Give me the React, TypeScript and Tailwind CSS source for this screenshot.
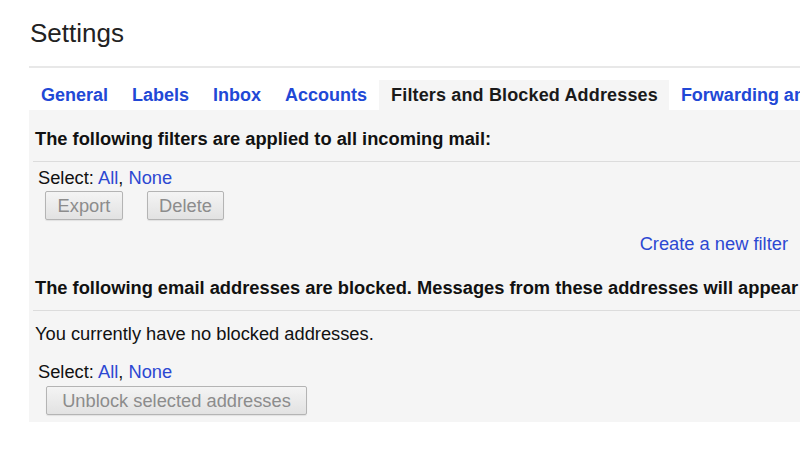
const tabs = ["General", "Labels", "Inbox", "Accounts", "Filters and Blocked Addresses", "Forwarding and POP/IMAP"];
const active = "Filters and Blocked Addresses";

function GrayButton({ label, width }: { label: string; width: string }) {
  return (
    <button
      className={`${width} h-[29px] rounded-[2px] border border-[#b4b4b4] bg-gradient-to-b from-[#f4f4f4] to-[#e2e2e2] text-[18.3px] leading-[27px] text-[#8c8c8c] text-center shadow-[0_1px_1px_rgba(0,0,0,0.08)]`}
    >
      {label}
    </button>
  );
}

function SelectLinks() {
  return (
    <p className="pl-[9px] text-[18.3px] leading-[21px] text-[#111]">
      Select: <span className="text-[#2c48d2]">All</span>, <span className="text-[#2c48d2]">None</span>
    </p>
  );
}

export default function App() {
  return (
    <div className="w-[800px] h-[450px] overflow-hidden bg-white font-['Liberation_Sans',Arial,sans-serif]">
      {/* page title */}
      <div className="pt-[18px]">
        <h1 className="pl-[30px] h-[30px] text-[26px] leading-[30px] text-[#222]">Settings</h1>
        <div className="ml-[29px] mt-[18px] border-b-2 border-[#e8e8e8]" />
      </div>

      {/* tabs */}
      <div className="ml-[29px] mt-[12px] flex whitespace-nowrap">
        {tabs.map(t => (
          <div
            key={t}
            className={`h-[30px] text-[18px] leading-[30px] font-bold shrink-0 ${t === active ? "pl-[12px] pr-[11px] bg-[#f5f5f5] text-[#1a1a1a] tracking-[0.15px]" : "px-3 text-[#2148d6]"}`}
          >
            {t}
          </div>
        ))}
      </div>

      {/* filters panel */}
      <div className="ml-[29px] h-[312px] bg-[#f5f5f5] pt-[18px]">
        <h2 className="pl-[6px] text-[18.3px] leading-[21px] font-bold text-[#111] whitespace-nowrap">
          The following filters are applied to all incoming mail:
        </h2>
        <div className="ml-[4px] mt-[12px] border-b border-[#dcdcdc]" />

        <div className="mt-[5px]">
          <SelectLinks />
          <div className="mt-[3px] pl-[16px] flex gap-[24px]">
            <GrayButton label="Export" width="w-[78px]" />
            <GrayButton label="Delete" width="w-[77px]" />
          </div>
        </div>

        <div className="mt-[13px] pr-[12px] flex justify-end">
          <span className="text-[18.3px] leading-[21px] text-[#2c48d2]">Create a new filter</span>
        </div>

        <h2 className="mt-[23px] pl-[6px] text-[18.3px] leading-[21px] font-bold text-[#111] whitespace-nowrap">
          The following email addresses are blocked. Messages from these addresses will appear in Spam:
        </h2>
        <div className="ml-[4px] mt-[12px] border-b border-[#dcdcdc]" />

        <p className="mt-[12px] pl-[6px] text-[18.3px] leading-[21px] text-[#111]">You currently have no blocked addresses.</p>

        <div className="mt-[17px]">
          <SelectLinks />
          <div className="mt-[4px] pl-[17px] flex">
            <GrayButton label="Unblock selected addresses" width="w-[261px]" />
          </div>
        </div>
      </div>
    </div>
  );
}
